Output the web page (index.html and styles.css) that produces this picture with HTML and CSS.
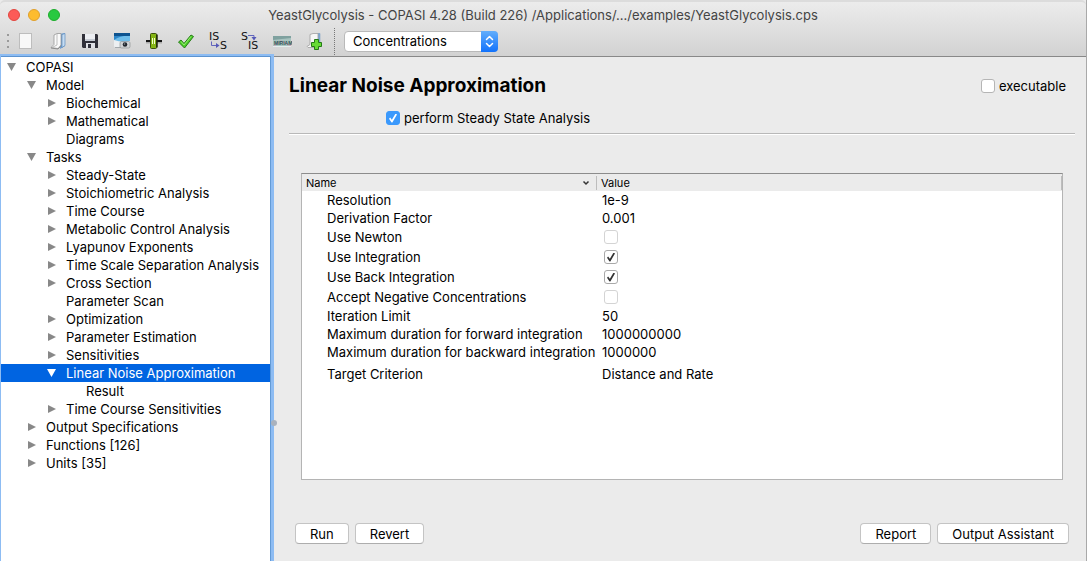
FILE: index.html
```html
<!DOCTYPE html>
<html lang="en">
<head>
<meta charset="utf-8">
<title>YeastGlycolysis - COPASI 4.28</title>
<link rel="stylesheet" href="styles.css">
</head>
<body>
<div class="window">
  <header class="chrome">
    <div class="titlebar">
      <div class="lights"><span class="light light-close"></span><span class="light light-min"></span><span class="light light-zoom"></span></div>
      <div class="title">YeastGlycolysis - COPASI 4.28 (Build 226) /Applications/.../examples/YeastGlycolysis.cps</div>
    </div>
    <div class="toolbar">
      <span class="grip"><i></i><i></i><i></i></span>
      <button class="tool" aria-label="New"><svg width="20" height="20" viewBox="0 0 20 20"><rect x="3.500" y="2.500" width="12" height="15" fill="#f8f8f8" stroke="#bdbdbd"/></svg></button>
      <button class="tool" aria-label="Open"><svg width="20" height="20" viewBox="0 0 20 20"><path d="M11 3l6-1v13l-5 3z" fill="#6f9fd2"/><path d="M14 3.500l3-1v12l-3 2z" fill="#c5dcf2" stroke="#5f8dbd" stroke-width=".7"/><path d="M6 4l3-1.500h4V14l-3 3.500-7-1 3-3z" fill="#fafafa" stroke="#989898" stroke-width=".8"/><path d="M9 3v11l-5 2.500" fill="none" stroke="#bdbdbd"/><path d="M3 17l7 1 3-3" fill="none" stroke="#8f8f8f"/></svg></button>
      <button class="tool" aria-label="Save"><svg width="20" height="20" viewBox="0 0 20 20"><path d="M2 3h15l1 1v13H3l-1-1z" fill="#303039"/><rect x="5" y="3" width="10" height="6" fill="#eceef2"/><rect x="5" y="8" width="10" height="2" fill="#c7ccd4"/><rect x="6" y="12" width="9" height="5" fill="#dfe1e6"/><rect x="8" y="13" width="3" height="4" fill="#30303a"/></svg></button>
      <button class="tool" aria-label="Capture"><svg width="20" height="20" viewBox="0 0 20 20"><rect x="2" y="2" width="16" height="9" fill="#2c86c9"/><path d="M2 9Q10 4 18 5v6H2z" fill="#6fbdea"/><rect x="2" y="2" width="16" height="3" fill="#0e538f"/><path d="M2 9q8 3 16 1v5l-2 2H3l-1-2z" fill="#eceff1"/><path d="M3 16.500h8" stroke="#a4a9ad"/><rect x="8" y="10.500" width="10" height="6.500" rx="1.500" fill="#d0d3d5" stroke="#85898c" stroke-width=".6"/><circle cx="13" cy="13.500" r="2.300" fill="#20262d"/><circle cx="12.500" cy="13" r=".8" fill="#87919a"/></svg></button>
      <button class="tool" aria-label="Slider"><svg width="20" height="20" viewBox="0 0 20 20"><path d="M2 11.500h16" stroke="#aaa" stroke-width="2"/><path d="M2 10h16" stroke="#151515" stroke-width="2"/><rect x="6.500" y="2.500" width="6" height="15" rx="1" fill="#84b414" stroke="#3b520a"/><path d="M13 3.500v13" stroke="#20290c" stroke-width="1.500"/><path d="M8.500 7v6M10.500 7v6" stroke="#f3ffcc"/></svg></button>
      <button class="tool" aria-label="Check"><svg width="20" height="20" viewBox="0 0 20 20"><path d="M2.500 11l2.500-2 3 3.500L15 4l2.500 1.500L8.500 17z" fill="#4fd02b" stroke="#277c19"/><path d="M5 10.500l3 3.500 7-8.500" fill="none" stroke="#98ee70"/></svg></button>
      <button class="tool" aria-label="Initial state to state"><svg class="glyphs" width="20" height="20" viewBox="0 0 20 20"><text x="1" y="9">IS</text><text x="12" y="18">S</text><path d="M3.500 10.500v4H9" fill="none" stroke="#6265bd"/><path d="M8 12l3.500 2.500L8 17z" fill="#5559b8"/></svg></button>
      <button class="tool" aria-label="State to initial state"><svg class="glyphs" width="20" height="20" viewBox="0 0 20 20"><text x="1" y="9">S</text><text x="8" y="18">IS</text><path d="M8 4.500h6V7" fill="none" stroke="#6265bd"/><path d="M11.500 6h5L14 9.500z" fill="#5559b8"/></svg></button>
      <button class="tool" aria-label="MIRIAM"><svg class="miriam" width="20" height="20" viewBox="0 0 20 20"><rect x="1" y="5" width="18" height="11" fill="#a8c4c0"/><path d="M1 5h18v2L1 9z" fill="#7fa19f"/><path d="M2 15l7-5 10 5" fill="none" stroke="#d99ab5"/><text x="2" y="14">MIRIAM</text><path d="M1 15.500h18" stroke="#e3eeee"/></svg></button>
      <button class="tool" aria-label="Add file"><svg width="20" height="20" viewBox="0 0 20 20"><path d="M14 2.500h2v13l-3 2z" fill="#81acd9" stroke="#6c94bf" stroke-width=".5"/><path d="M6 3.500l3-1h5v14H4l-1-1 3-2z" fill="#f6f6f6" stroke="#a0a0a0" stroke-width=".8"/><path d="M10.500 8.500h4v3h3v4h-3v3h-4v-3h-3v-4h3z" fill="#67db35" stroke="#247a16"/></svg></button>
      <span class="divider"></span>
      <label class="combo">
        <select aria-label="Framework"><option>Concentrations</option></select>
        <svg class="combo-cap" viewBox="0 0 16 21"><path d="M5 8.500l3-3 3 3M5 12.500l3 3 3-3" fill="none" stroke="#fff" stroke-width="1.500" stroke-linecap="round" stroke-linejoin="round"/></svg>
      </label>
    </div>
  </header>
  <div class="body">
    <nav class="sidebar">
      <ul class="tree">
        <li><div class="node open">COPASI</div>
          <ul>
            <li><div class="node open">Model</div>
              <ul>
                <li><div class="node closed">Biochemical</div></li>
                <li><div class="node closed">Mathematical</div></li>
                <li><div class="node">Diagrams</div></li>
              </ul></li>
            <li><div class="node open">Tasks</div>
              <ul>
                <li><div class="node closed">Steady-State</div></li>
                <li><div class="node closed">Stoichiometric Analysis</div></li>
                <li><div class="node closed">Time Course</div></li>
                <li><div class="node closed">Metabolic Control Analysis</div></li>
                <li><div class="node closed">Lyapunov Exponents</div></li>
                <li><div class="node closed">Time Scale Separation Analysis</div></li>
                <li><div class="node closed">Cross Section</div></li>
                <li><div class="node">Parameter Scan</div></li>
                <li><div class="node closed">Optimization</div></li>
                <li><div class="node closed">Parameter Estimation</div></li>
                <li><div class="node closed">Sensitivities</div></li>
                <li><div class="node open selected">Linear Noise Approximation</div>
                  <ul><li><div class="node">Result</div></li></ul></li>
                <li><div class="node closed">Time Course Sensitivities</div></li>
              </ul></li>
            <li><div class="node closed">Output Specifications</div></li>
            <li><div class="node closed">Functions [126]</div></li>
            <li><div class="node closed">Units [35]</div></li>
          </ul></li>
      </ul>
      <span class="splitter-dot"></span>
    </nav>
    <main class="content">
      <div class="heading">
        <h1>Linear Noise Approximation</h1>
        <label class="check"><input type="checkbox">executable</label>
      </div>
      <label class="check perform"><input type="checkbox" class="blue" checked>perform Steady State Analysis</label>
      <hr>
      <div class="panel">
        <table>
          <thead><tr><th class="name"><span class="sort">Name<svg width="8" height="6" viewBox="0 0 8 6"><path d="M1.500 1.500L4 4l2.500-2.500" fill="none" stroke="#333" stroke-width="1.500"/></svg></span></th><th><span class="value-head">Value</span></th></tr></thead>
          <tbody>
            <tr><td>Resolution</td><td>1e-9</td></tr>
            <tr><td>Derivation Factor</td><td>0.001</td></tr>
            <tr class="tick"><td><label for="newton">Use Newton</label></td><td><input type="checkbox" id="newton"></td></tr>
            <tr class="tick"><td><label for="integ">Use Integration</label></td><td><input type="checkbox" id="integ" checked></td></tr>
            <tr class="tick"><td><label for="back">Use Back Integration</label></td><td><input type="checkbox" id="back" checked></td></tr>
            <tr class="tick"><td><label for="neg">Accept Negative Concentrations</label></td><td><input type="checkbox" id="neg"></td></tr>
            <tr><td>Iteration Limit</td><td>50</td></tr>
            <tr><td>Maximum duration for forward integration</td><td>1000000000</td></tr>
            <tr><td>Maximum duration for backward integration</td><td>1000000</td></tr>
            <tr class="tall"><td>Target Criterion</td><td>Distance and Rate</td></tr>
          </tbody>
        </table>
      </div>
      <div class="actions">
        <button class="push">Run</button>
        <button class="push">Revert</button>
        <button class="push right">Report</button>
        <button class="push">Output Assistant</button>
      </div>
    </main>
  </div>
</div>
</body>
</html>
```
FILE: styles.css
```css
* { box-sizing: border-box; }
body {
  margin: 0;
  font: 13px/18px Inter, "Liberation Sans", sans-serif;
  color: #000;
  background: #fff;
}
button, select, input { font: inherit; color: inherit; margin: 0; }
ul { list-style: none; margin: 0; padding: 0; }

.window {
  display: flex;
  flex-direction: column;
  min-height: 100vh;
  border-right: 1px solid #a9a9a9;
  background: #ebebeb;
}
.chrome {
  padding-bottom: 1px;
  background: linear-gradient(#ececec, #d2d2d2);
  border-top: 2px solid #dcdcdc;
  border-bottom: 1px solid #888;
  border-radius: 5px 5px 0 0;
}
.titlebar {
  display: grid;
  grid-template-columns: 1fr auto 1fr;
  align-items: center;
  height: 25px;
}
.lights { display: flex; gap: 8px; padding-left: 8px; }
.light { width: 12px; height: 12px; border-radius: 50%; border: 1px solid; }
.light-close { background: #fc5b57; border-color: #e2463f; }
.light-min { background: #fdbc2f; border-color: #e0a02c; }
.light-zoom { background: #28c941; border-color: #1dad2b; }
.title { color: #444; white-space: nowrap; }

.toolbar { display: flex; align-items: center; height: 28px; }
.grip { display: flex; flex-direction: column; gap: 4px; width: 10px; padding-left: 7px; }
.grip i { width: 2px; height: 2px; background: #9a9a9a; }
.tool {
  display: grid;
  place-items: center;
  width: 32px;
  height: 28px;
  padding: 0;
  border: 0;
  background: none;
}
.tool svg { display: block; }
.glyphs text { font: 11px "DejaVu Sans", sans-serif; fill: #111; }
.miriam text { font: bold 5px "Liberation Sans", sans-serif; fill: #2f5556; }
.divider { height: 27px; margin-left: 4px; border-left: 1px dotted #777; }
.combo { position: relative; display: flex; width: 154px; height: 21px; margin-left: 9px; }
.combo select {
  appearance: none;
  width: 100%;
  padding: 0 24px 0 8px;
  border: 1px solid #b9b9b9;
  border-radius: 4px;
  background: #fff;
}
.combo-cap {
  position: absolute;
  top: 0;
  right: 0;
  width: 17px;
  height: 21px;
  border-radius: 0 4px 4px 0;
  background: linear-gradient(#62aefc, #1272fb);
  pointer-events: none;
}

.body { display: flex; flex: 1; }
.sidebar {
  --indent: 25px;
  position: relative;
  flex: none;
  width: 274px;
  margin-top: -3px;
  border: solid #8dbcf3;
  border-width: 2px 3px 0 1px;
  background: #fff;
}
.tree {
  min-height: 100%;
  padding-top: 1px;
  border-top: 1px solid #5c93cf;
  border-right: 1px solid #649bd6;
}
.tree ul { --indent: 45px; }
.tree ul ul { --indent: 65px; }
.tree ul ul ul { --indent: 85px; }
.node {
  display: flex;
  align-items: center;
  height: 18px;
  padding-left: calc(var(--indent) - 20px);
  white-space: nowrap;
}
.node::before { content: ""; width: 9px; height: 8px; margin: 0 10px 0 1px; }
.open::before { background: #888; clip-path: polygon(0 0, 100% 0, 50% 100%); }
.closed::before { background: #888; width: 8px; margin: 0 10px 0 2px; clip-path: polygon(0 0, 100% 50%, 0 100%); }
.selected { background: #0064e1; color: #fff; }
.selected::before { background: #fff; }
.splitter-dot {
  position: absolute;
  top: 364px;
  right: -6px;
  width: 6px;
  height: 6px;
  border-radius: 50%;
  background: #a9b2be;
}

.content {
  display: flex;
  flex-direction: column;
  flex: 1;
  min-width: 0;
  padding: 17px 11px 17px 15px;
}
.heading { display: flex; justify-content: space-between; align-items: center; padding-right: 9px; }
h1 { margin: 0; font-size: 19px; line-height: 24px; font-weight: 700; }
.check { display: flex; align-items: center; gap: 4px; }
.perform { align-self: flex-start; height: 20px; margin: 10px 0 0 97px; }
input[type="checkbox"] {
  appearance: none;
  display: block;
  width: 14px;
  height: 14px;
  border: 1px solid #b5b5b5;
  border-radius: 3px;
  background: #fff;
}
input[type="checkbox"]:checked { display: grid; place-items: center; }
input[type="checkbox"]:checked::before {
  content: "";
  width: 8px;
  height: 9px;
  background: #333;
  clip-path: polygon(0 58%, 14% 45%, 36% 70%, 82% 0, 100% 10%, 42% 100%, 32% 100%);
}
input.blue { background: #3b99fc; border-color: #3b99fc; }
input.blue:checked::before { background: #fff; }
hr { width: 100%; height: 2px; margin: 5px 0 0; border: 0; background: #fff; border-top: 1px solid #b8b8b8; }

.panel {
  flex: 1;
  margin: 38px 12px 0;
  border: 1px solid #b4b4b4;
  border-top-color: #8c8c8c;
  background: #fff;
}
table { width: 100%; border-collapse: collapse; table-layout: fixed; }
th { height: 17px; padding: 0; background: #ebebeb; font-size: 11px; line-height: 14px; font-weight: 400; text-align: left; }
.name { width: 295px; }
.sort { display: flex; justify-content: space-between; align-items: center; padding: 0 6px 0 4px; border-right: 1px solid #bdbdbd; }
.value-head { display: block; padding-left: 4px; border-right: 1px solid #bdbdbd; }
td { height: 18px; padding: 0 0 0 5px; line-height: 18px; white-space: nowrap; }
td:first-child { padding-left: 25px; }
.tick td { height: 20px; }
.tick input { margin-left: 2px; border-color: #d4d4d4; }
.tick input:checked { border-color: #a9a9a9; }
.tall td { height: 26px; }

.actions { display: flex; gap: 6px; margin-top: 43px; padding: 0 6px; }
.push {
  height: 21px;
  padding: 0 14px;
  border: 1px solid #c4c4c4;
  border-bottom-color: #adadad;
  border-radius: 4px;
  background: #fff;
  line-height: 18px;
}
.right { margin-left: auto; }
```
